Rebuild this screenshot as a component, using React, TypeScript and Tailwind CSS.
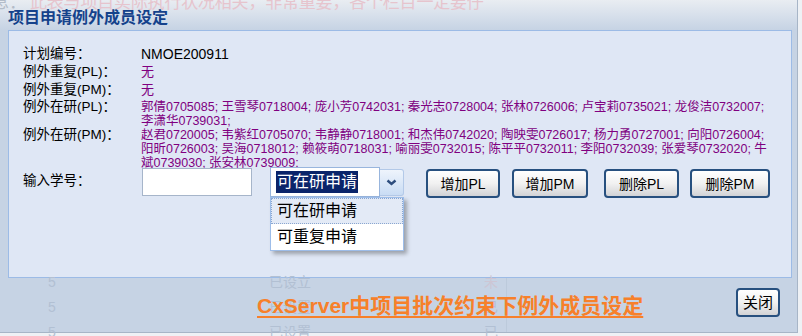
const plLines = [
  "郭倩0705085; 王雪琴0718004; 庞小芳0742031; 秦光志0728004; 张林0726006; 卢宝莉0735021; 龙俊洁0732007;",
  "李潇华0739031;",
];

const pmLines = [
  "赵君0720005; 韦紫红0705070; 韦静静0718001; 和杰伟0742020; 陶映雯0726017; 杨力勇0727001; 向阳0726004;",
  "阳昕0726003; 吴海0718012; 赖筱萌0718031; 喻丽雯0732015; 陈平平0732011; 李阳0732039; 张爱琴0732020; 牛",
  "斌0739030; 张安林0739009;",
];

const actions = [
  { label: "增加PL", w: "w-[74px]", ml: "ml-[22px]" },
  { label: "增加PM", w: "w-[76px]", ml: "ml-[12px]" },
  { label: "删除PL", w: "w-[75px]", ml: "ml-[16px]" },
  { label: "删除PM", w: "w-[80px]", ml: "ml-[11px]" },
];

const Btn = ({ children, className }: { children: React.ReactNode; className?: string }) => (
  <button
    className={`flex items-center justify-center h-[29px] border-2 border-[#27507f] rounded-[4px] bg-linear-to-b from-white via-[#f1f1f1] to-[#d2d3d6] text-[14px] text-black leading-none ${className ?? ""}`}
  >
    {children}
  </button>
);

const App = () => {
  return (
    <div className="relative w-[802px] h-[336px] overflow-hidden bg-[#eef1f5] font-['Liberation_Sans','Noto_Sans_CJK_SC',sans-serif]">
      <div className="flex flex-col w-[798px] h-[333px] bg-[#c6d3e4] border-r border-b border-[#a7b5c7]">
        {/* title bar */}
        <div className="relative h-[30px] shrink-0 bg-linear-to-b from-[#e9edf2] to-[#c6d3e4] overflow-hidden">
          <div className="absolute -top-[7px] left-0 flex whitespace-nowrap text-[17px] leading-[20px] pointer-events-none">
            <span className="-ml-[8px] w-[38px] text-[#b3bcc8]">息：</span>
            <span className="text-[#e6c4cd] tracking-[-0.2px]">此表与项目实际执行状况相关，非常重要，各个栏目一定要仔</span>
          </div>
          <div className="relative w-fit ml-[8px] mt-[6px] text-[16px] leading-[20px] font-bold text-[#15428b] font-['Noto_Sans_CJK_SC',sans-serif]">
            项目申请例外成员设定
          </div>
        </div>

        {/* panel */}
        <div className="ml-[8px] w-[784px] h-[248px] shrink-0 border border-[#9cbbe6] bg-[#dfe7f5] pt-[14px] pl-[14px] text-black">
          <div className="flex h-[18px] items-center">
            <div className="w-[118px] text-[13.5px]">计划编号：</div>
            <div className="text-[14px]">NMOE200911</div>
          </div>
          <div className="flex h-[18px] items-center">
            <div className="w-[118px] text-[13.5px]">例外重复(PL)：</div>
            <div className="text-[13px] text-[#800080]">无</div>
          </div>
          <div className="flex h-[18px] items-center">
            <div className="w-[118px] text-[13.5px]">例外重复(PM)：</div>
            <div className="text-[13px] text-[#800080]">无</div>
          </div>
          <div className="flex items-start mt-[1px]">
            <div className="w-[118px] text-[13.5px] leading-[14px]">例外在研(PL)：</div>
            <div className="text-[12.5px] leading-[14px] text-[#800080] whitespace-nowrap">
              {plLines.map((l) => (
                <div key={l}>{l}</div>
              ))}
            </div>
          </div>
          <div className="flex items-start">
            <div className="w-[118px] text-[13.5px] leading-[14px]">例外在研(PM)：</div>
            <div className="text-[12.5px] leading-[14px] text-[#800080] whitespace-nowrap">
              {pmLines.map((l) => (
                <div key={l}>{l}</div>
              ))}
            </div>
          </div>

          {/* input row */}
          <div className="flex items-start -mt-[3px] h-[30px]">
            <div className="w-[119px] h-[28px] flex items-center text-[13.5px]">输入学号：</div>
            <div className="w-[110px] h-[28px] mt-[1px] border border-[#a6b5ca] bg-white" />
            <div className="relative ml-[18px] flex">
              <div className="w-[110px] h-[30px] border border-[#98b5dd] bg-white flex items-center pl-[5px]">
                <span className="bg-[#0a246a] text-white text-[16px] leading-[22px] px-[1px]">可在研申请</span>
              </div>
              <div className="w-[24px] h-[27px] mt-[2px] rounded-r-[3px] border border-l-0 border-[#b3c9e8] bg-linear-to-b from-[#eef4fc] to-[#c9dcf4] flex items-center justify-center">
                <svg width="11" height="7" viewBox="0 0 11 7">
                  <path d="M1.5 1.5 L5.5 5 L9.5 1.5" fill="none" stroke="#2d4d7e" strokeWidth="2.4" />
                </svg>
              </div>
              <div className="absolute left-0 top-[30px] w-[134px] border border-[#9dbde9] bg-white shadow-[3px_3px_4px_rgba(0,0,0,0.3)] text-[16px] z-10">
                <div className="h-[26px] flex items-center pl-[5px] bg-[#e3eaf6] border border-dotted border-[#8aa6d0]">
                  可在研申请
                </div>
                <div className="h-[26px] flex items-center pl-[6px]">可重复申请</div>
              </div>
            </div>
            {actions.map((a) => (
              <Btn key={a.label} className={`${a.w} ${a.ml} mt-[2px]`}>
                {a.label}
              </Btn>
            ))}
          </div>
        </div>

        {/* footer */}
        <div className="relative flex-1 flex items-start">
          <div className="absolute inset-0 pointer-events-none text-[14px] leading-[16px] text-[#b2c0d3]">
            <span className="absolute left-[48px] -top-[4px]">5</span>
            <span className="absolute left-[48px] top-[21px]">5</span>
            <span className="absolute left-[48px] top-[46px]">5</span>
            <span className="absolute left-[269px] -top-[4px]">已设立</span>
            <span className="absolute left-[269px] top-[21px]">已设置</span>
            <span className="absolute left-[269px] top-[46px]">已设置</span>
            <span className="absolute left-[484px] -top-[4px] text-[#cdc6d4]">未</span>
            <span className="absolute left-[484px] top-[21px]">已</span>
            <span className="absolute left-[484px] top-[46px]">已</span>
            <div className="absolute left-[506px] top-0 bottom-0 w-px bg-[#bccadb]" />
          </div>
          <a className="relative ml-[257px] mt-[16px] text-[21px] leading-[24px] font-bold text-[#f7802a] underline underline-offset-[3px] decoration-[2px] whitespace-nowrap">
            CxServer中项目批次约束下例外成员设定
          </a>
          <Btn className="relative ml-auto mr-[17px] mt-[10px] w-[44px] h-[28px] text-[15px]">关闭</Btn>
        </div>
      </div>
    </div>
  );
};

export default App;
